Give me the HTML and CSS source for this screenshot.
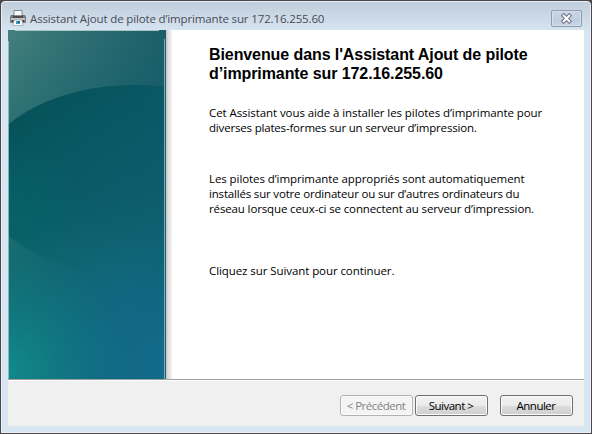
FILE: index.html
```html
<!DOCTYPE html>
<html lang="fr">
<head>
<meta charset="utf-8">
<title>Assistant Ajout de pilote d’imprimante</title>
<link rel="stylesheet" href="styles.css">
</head>
<body>
<div class="window">
  <header class="titlebar">
    <svg class="printer" width="16" height="16" viewBox="0 0 16 16">
      <path d="M4 .5h8v6H4z" fill="#fafafa" stroke="#85898e"/>
      <path d="M1 5h2v2h10V5h2l1 2v5.5l-1 .5H1l-1-.5V7z" fill="#77797c"/>
      <path d="M3 5h10v3H3z" fill="#4a4c4e"/>
      <path d="M4 5h8v1H4z" fill="#909498"/>
      <path d="M1 8h14v2H1z" fill="#c6c7c8"/>
      <path d="M2 10h12v2H2z" fill="#444648"/>
      <path d="M4 10h8l1 5.5H3z" fill="#fff" stroke="#8a9299" stroke-width=".6"/>
      <path d="M6 11h2v3H6z" fill="#3c9ac8"/>
      <path d="M8 11h2v2H8z" fill="#2b5aa0"/>
      <path d="M8 13h2v1H8z" fill="#56a46c"/>
    </svg>
    <h1 class="title">Assistant Ajout de pilote d’imprimante sur 172.16.255.60</h1>
    <button class="close" aria-label="Fermer">
      <svg width="13" height="11" viewBox="0 0 13 11">
        <path d="M3.7 2.7l5.6 5.6M9.3 2.7L3.7 8.3" stroke="#687182" stroke-width="4" stroke-linecap="square"/>
        <path d="M3.7 2.7l5.6 5.6M9.3 2.7L3.7 8.3" stroke="#fff" stroke-width="2" stroke-linecap="square"/>
      </svg>
    </button>
  </header>
  <div class="client">
    <main class="page">
      <svg class="banner" width="158" height="349" viewBox="0 0 158 349">
        <defs>
          <linearGradient id="base" x1="0" y1="0" x2=".15" y2="1">
            <stop offset="0" stop-color="#44807d"/>
            <stop offset=".28" stop-color="#2b7072"/>
            <stop offset=".65" stop-color="#17706f"/>
            <stop offset="1" stop-color="#0f7581"/>
          </linearGradient>
          <linearGradient id="side" x1="0" y1="0" x2="1" y2="0">
            <stop offset="0" stop-color="#0d5264" stop-opacity="0"/>
            <stop offset="1" stop-color="#0d5264" stop-opacity=".65"/>
          </linearGradient>
          <radialGradient id="blue" gradientUnits="userSpaceOnUse" cx="158" cy="335" r="230">
            <stop offset="0" stop-color="#136b8c"/>
            <stop offset=".3" stop-color="#116987" stop-opacity=".8"/>
            <stop offset=".65" stop-color="#0e6476" stop-opacity=".5"/>
            <stop offset="1" stop-color="#0d6070" stop-opacity="0"/>
          </radialGradient>
          <radialGradient id="glow" gradientUnits="userSpaceOnUse" cx="0" cy="340" r="120">
            <stop offset="0" stop-color="#118d8c" stop-opacity=".9"/>
            <stop offset=".5" stop-color="#118386" stop-opacity=".45"/>
            <stop offset="1" stop-color="#117a80" stop-opacity="0"/>
          </radialGradient>
          <linearGradient id="disc" gradientUnits="userSpaceOnUse" x1="40" y1="60" x2="90" y2="250">
            <stop offset="0" stop-color="#045055"/>
            <stop offset=".5" stop-color="#07585f"/>
            <stop offset=".8" stop-color="#0a6069"/>
            <stop offset="1" stop-color="#0d6572"/>
          </linearGradient>
          <linearGradient id="discside" gradientUnits="userSpaceOnUse" x1="0" y1="60" x2="158" y2="150">
            <stop offset="0" stop-color="#0e5c70" stop-opacity="0"/>
            <stop offset="1" stop-color="#0e5c70" stop-opacity=".75"/>
          </linearGradient>
          <radialGradient id="green" gradientUnits="userSpaceOnUse" cx="0" cy="190" r="80">
            <stop offset="0" stop-color="#046466" stop-opacity=".8"/>
            <stop offset="1" stop-color="#046466" stop-opacity="0"/>
          </radialGradient>
          <linearGradient id="fade" gradientUnits="userSpaceOnUse" x1="50" y1="150" x2="85" y2="240">
            <stop offset="0" stop-color="#fff"/>
            <stop offset=".4" stop-color="#fff"/>
            <stop offset="1" stop-color="#000"/>
          </linearGradient>
          <mask id="soft"><rect width="158" height="349" fill="url(#fade)"/></mask>
        </defs>
        <rect width="158" height="349" fill="url(#base)"/>
        <rect width="158" height="349" fill="url(#side)"/>
        <rect width="158" height="349" fill="url(#blue)"/>
        <rect width="158" height="349" fill="url(#glow)"/>
        <g mask="url(#soft)">
          <ellipse cx="127" cy="150" rx="156" ry="95" fill="url(#disc)"/>
          <ellipse cx="127" cy="150" rx="156" ry="95" fill="url(#discside)"/>
          <ellipse cx="127" cy="150" rx="156" ry="95" fill="url(#green)"/>
        </g>
        <path d="M7 .5h144" stroke="#a9c4c3"/>
        <path d="M.5 11v338" stroke="#b0ccd0" stroke-opacity=".75"/>
        <path d="M156.5 9v340" stroke="#a2c5cb" stroke-opacity=".75"/>
        <path d="M157.5 9v340" stroke="#235c6d"/>
      </svg>
      <div class="shadow"></div>
      <section class="content">
        <h2 class="heading">Bienvenue dans l'Assistant Ajout de pilote<br>d’imprimante sur 172.16.255.60</h2>
        <p class="intro"><span class="line">Cet Assistant vous aide à installer les pilotes d’imprimante pour</span> <span class="line tight">diverses plates-formes sur un serveur d’impression.</span></p>
        <p class="details"><span class="line">Les pilotes d’imprimante appropriés sont automatiquement</span> <span class="line tight">installés sur votre ordinateur ou sur d’autres ordinateurs du</span> <span class="line snug">réseau lorsque ceux-ci se connectent au serveur d’impression.</span></p>
        <p class="prompt"><span class="line">Cliquez sur Suivant pour continuer.</span></p>
      </section>
    </main>
    <footer class="actions">
      <button class="btn" disabled>&lt; Précédent</button>
      <button class="btn">Suivant &gt;</button>
      <button class="btn cancel">Annuler</button>
    </footer>
  </div>
</div>
</body>
</html>
```
FILE: styles.css
```css
* { box-sizing: border-box; }
body { margin: 0; background: #4b4649; font-family: "Open Sans", "Noto Sans", sans-serif; font-size: 11.5px; color: #000; }
.window {
  width: 592px;
  height: 434px;
  padding: 0 7px 7px;
  border: 1px solid #4b484b;
  border-radius: 5px 5px 0 0;
  background: linear-gradient(#bfcddb, #d7e4f2 30px);
  box-shadow: inset 0 0 0 1px #e9f0f7;
}
.titlebar { display: flex; align-items: center; height: 29px; padding: 5px 1px 0 2px; }
.printer { flex: none; margin-top: -1px; }
.title { flex: 1; margin: 1px 0 0 4px; font-size: 11.5px; font-weight: 400; line-height: 16px; letter-spacing: -.14px; color: #484d55; white-space: nowrap; }
.close {
  display: flex; align-items: center; justify-content: center;
  width: 31px; height: 17px; margin-right: 1px; padding: 0;
  border: 1px solid #8e9bb0; border-radius: 2px;
  background: linear-gradient(#c9d5e3, #c2cfde 50%, #bccada 51%, #c9d6e4);
  box-shadow: inset 0 0 0 1px #d6e0eb;
}
.client { height: 396px; display: flex; flex-direction: column; background: #f0f0f0; }
.page { display: flex; height: 350px; background: #fff; border-bottom: 1px solid #a0a0a0; }
.banner { display: block; flex: none; }
.shadow { width: 6px; background: linear-gradient(90deg, #c4c4c4, #dedede 40%, #f3f3f3); }
.content { flex: 1; padding: 15px 0 0 37px; white-space: nowrap; }
.heading { margin: 0; font: bold 16px/19px "Liberation Sans", Arial, sans-serif; letter-spacing: -.09px; }
p { margin: 0; }
.line { display: block; line-height: 15px; letter-spacing: -.08px; }
.snug { letter-spacing: -.13px; }
.tight { letter-spacing: -.18px; }
.intro { margin-top: 22px; }
.details { margin-top: 36px; }
.prompt { margin-top: 47px; }
.actions { display: flex; flex: 1; gap: 2px; padding: 14px 11px 0; justify-content: flex-end; border-top: 1px solid #fff; }
.btn {
  width: 73px; height: 21px; padding: 0 1px 1px 0;
  border: 1px solid #707070; border-radius: 3px;
  background: linear-gradient(#f2f2f2, #ebebeb 50%, #dddddd 51%, #cfcfcf);
  box-shadow: inset 0 0 0 1px #fbfbfb;
  font: 11.5px/17px "Open Sans", "Noto Sans", sans-serif; letter-spacing: -.5px; color: #000; white-space: nowrap;
}
.btn:disabled { border-color: #adb2b5; background: #f4f4f4; color: #838383; }
.cancel { margin-left: 10px; }
```
